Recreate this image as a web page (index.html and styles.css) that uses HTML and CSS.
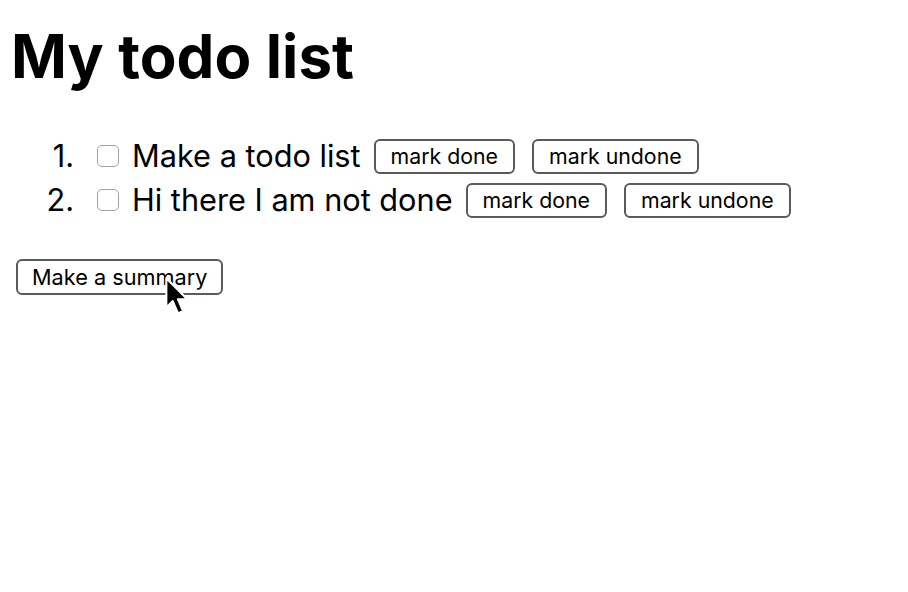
FILE: index.html
```html
<!DOCTYPE html>
<html>
<head>
<meta charset="utf-8">
<link rel="stylesheet" href="styles.css">
</head>
<body>
<h1 class="title">My todo list</h1>
<ol class="todos">
  <li class="todo">
    <span class="box"></span>
    <span class="label">Make a todo list</span>
    <button class="btn">mark done</button>
    <button class="btn">mark undone</button>
  </li>
  <li class="todo">
    <span class="box"></span>
    <span class="label">Hi there I am not done</span>
    <button class="btn">mark done</button>
    <button class="btn">mark undone</button>
  </li>
</ol>
<div class="actions">
  <button class="btn btn-summary">Make a summary</button>
  <div class="cursor">
    <svg class="cursor-svg" width="28" height="42" viewBox="0 0 24 36">
      <path d="M2 2 L2 27 L7.5 21.5 L12 32 L16.5 30.2 L12 20 L20 20 Z" fill="#000" stroke="#fff" stroke-width="1.8" stroke-linejoin="round"></path>
    </svg>
  </div>
</div>
</body>
</html>
```
FILE: styles.css
```css
html, body {
  background: #fff;
}
body {
  margin: 0;
  padding: 0 8px;
  font-family: "Inter", "Noto Sans", sans-serif;
  color: #000;
}
.title {
  font-size: 60px;
  font-weight: 700;
  letter-spacing: 0.1px;
  margin: 18px 0 0 3px;
  line-height: 76px;
}
.todos {
  list-style: none;
  margin: 39px 0 0 0;
  padding: 0;
  counter-reset: item;
}
.todo {
  counter-increment: item;
  display: flex;
  align-items: center;
  height: 44px;
  font-size: 30.7px;
}
.todo::before {
  content: counter(item) ".";
  width: 66px;
  text-align: right;
  margin-right: 23px;
}
.box {
  width: 20px;
  height: 20px;
  border: 1px solid #a0a0a0;
  border-radius: 5px;
  margin-right: 13px;
  margin-top: 2px;
}
.label {
  margin-right: 13px;
}
.btn {
  font-family: "Inter", "Noto Sans", sans-serif;
  font-size: 21.3px;
  background: #fff;
  color: #000;
  border: 2px solid #5a5a5a;
  border-radius: 6px;
  height: 35px;
  padding: 0 15px;
  margin-right: 17px;
  margin-top: 2px;
}
.actions {
  position: relative;
  margin-top: 36px;
  padding-left: 8px;
  height: 60px;
}
.btn-summary {
  height: 36px;
  padding: 0 14px;
  font-size: 21.7px;
}
.cursor {
  position: absolute;
  left: 156px;
  top: 19px;
  width: 28px;
  height: 42px;
  z-index: 2;
}
.cursor-svg {
  display: block;
  overflow: visible;
}
```
